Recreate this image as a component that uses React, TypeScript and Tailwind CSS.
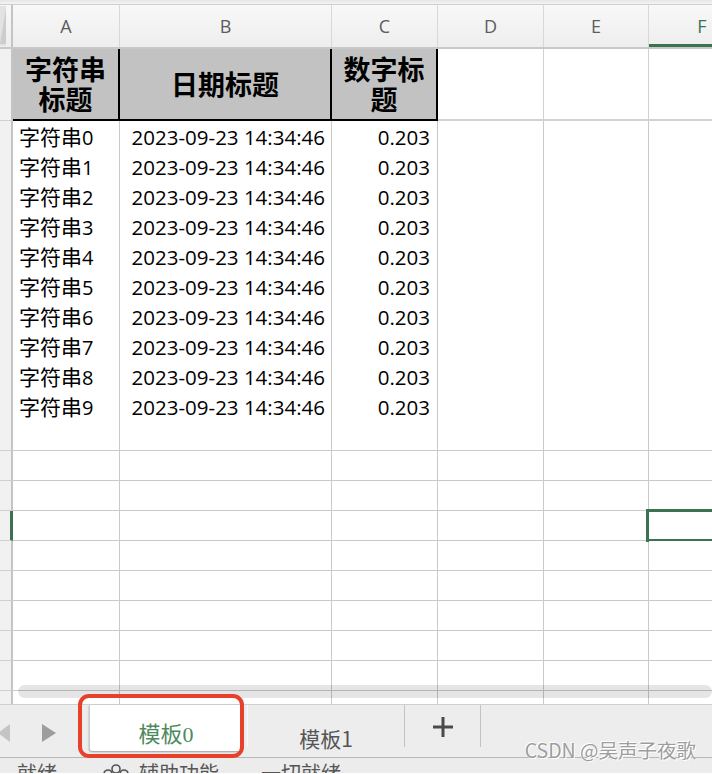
import React from "react";

const GRID = "grid grid-cols-[13px_107px_212px_106px_106px_105px_106px]";
const LETTERS = ["A", "B", "C", "D", "E"];
const DATA = Array.from({ length: 10 }, (_, i) => i);
const TOTAL_ROWS = 20;
const SELECTED_ROW = 13;

const latin = "font-['Open_Sans','Noto_Sans_CJK_SC',sans-serif]";
const cjk = "font-['Noto_Sans_CJK_SC',sans-serif]";

function RowHead({ n, selected }: { n: number; selected?: boolean }) {
  return (
    <div
      className={`flex items-center justify-end overflow-hidden bg-[#f1f1f1] border-b border-[#cfcfcf] ${
        selected ? "border-r-[3px] border-r-[#3b7350]" : "border-r-2 border-r-[#c4c4c4]"
      }`}
    >
      <span className={`mr-[11px] text-[16px] text-[#8a8a8a] ${latin}`}>{n}</span>
    </div>
  );
}

function ColumnHeader() {
  return (
    <div className={`${GRID} h-[44px] border-b-2 border-[#c8c8c8] bg-gradient-to-b from-[#f8f8f8] to-[#eeeeee]`}>
      <div className="flex border-r-2 border-[#c4c4c4] pr-[5px] py-[1px]">
        <div className="relative flex-1 bg-[#e2e2e2]">
          <svg className="absolute inset-0 h-full w-full" viewBox="0 0 8 40" preserveAspectRatio="none">
            <polygon points="8,2 8,38 0,38" fill="#cdcdcd" />
          </svg>
        </div>
      </div>
      {LETTERS.map((l) => (
        <div
          key={l}
          className={`flex items-center justify-center border-r border-[#d8d8d8] text-[18px] text-[#5c5c5c] ${latin}`}
        >
          {l}
        </div>
      ))}
      <div className={`flex items-center justify-center border-b-[3px] border-[#3b7350] pt-[3px] text-[18px] text-[#3b7350] ${latin}`}>
        F
      </div>
    </div>
  );
}

function TitleRow() {
  const head = `flex items-center justify-center bg-[#c2c2c2] border-r-2 border-b-2 border-black text-center text-[27px] font-bold leading-[30px] text-black ${cjk}`;
  return (
    <div className={`${GRID} h-[72px]`}>
      <RowHead n={1} />
      <div className={head}>
        <span>
          字符串
          <br />
          标题
        </span>
      </div>
      <div className={head}>日期标题</div>
      <div className={head}>
        <span>
          数字标
          <br />
          题
        </span>
      </div>
      <div className="border-r border-b-2 border-[#d2d2d2] bg-white" />
      <div className="border-r border-b-2 border-[#d2d2d2] bg-white" />
      <div className="border-b-2 border-[#d2d2d2] bg-white" />
    </div>
  );
}

function Row({ idx }: { idx: number }) {
  const hasData = idx < DATA.length;
  const cell = "flex items-center border-r border-b border-[#c9c9c9] bg-white pb-[1px] text-black whitespace-nowrap";
  return (
    <div className={`${GRID} h-[30px]`}>
      <RowHead n={idx + 2} selected={idx === SELECTED_ROW} />
      <div className={`${cell} pl-[6px]`}>
        {hasData && (
          <span className={`text-[20px] ${latin}`}>
            <span className={`text-[21px] ${cjk}`}>字符串</span>
            {idx}
          </span>
        )}
      </div>
      <div className={`${cell} justify-end pr-[6px] text-[20.5px] ${latin}`}>
        {hasData && "2023-09-23 14:34:46"}
      </div>
      <div className={`${cell} justify-end pr-[7px] text-[20.5px] ${latin}`}>{hasData && "0.203"}</div>
      <div className={cell} />
      <div className={cell} />
      <div className={`${cell} relative`}>
        {idx === SELECTED_ROW && (
          <div className="absolute -left-[3px] -top-[2px] -right-[2px] -bottom-[2px] border-[3px] border-[#3b7350]" />
        )}
      </div>
    </div>
  );
}

function TabBar() {
  return (
    <div className="relative flex h-[54px] border-t border-b border-t-[#d0d0d0] border-b-[#b8b8b8] bg-[#ededed]">
      <div className="flex w-[89px] items-center pt-[3px]">
        <svg width="12" height="18" viewBox="0 0 12 18" className="-ml-[2px]">
          <polygon points="12,0 12,18 0,9" fill="#c4c4c4" />
        </svg>
        <svg width="14" height="18" viewBox="0 0 14 18" className="ml-[32px]">
          <polygon points="0,0 0,18 14,9" fill="#9d9d9d" />
        </svg>
      </div>
      <div className="flex h-[46px] w-[153px] justify-center rounded-b-[3px] border-l border-[#c9c9c9] bg-white pt-[18px] shadow-[0_1px_2px_rgba(0,0,0,0.35)]">
        <span className="font-['Liberation_Serif','Noto_Sans_CJK_SC',serif] text-[22px] leading-[24px] text-[#4e8a5d]">
          模板0
        </span>
      </div>
      <div className="ml-[5px] flex h-[42px] w-[158px] justify-center border-l border-r border-l-[#f8f8f8] border-r-[#c2c2c2] pt-[21px]">
        <span className={`text-[21px] leading-[24px] text-[#555] ${cjk}`}>模板1</span>
      </div>
      <div className="flex h-[42px] w-[76px] items-center justify-center border-r border-[#c2c2c2] pt-[2px]">
        <svg width="20" height="20" viewBox="0 0 20 20">
          <rect x="0" y="8.5" width="20" height="3" fill="#4a4a4a" />
          <rect x="8.5" y="0" width="3" height="20" fill="#4a4a4a" />
        </svg>
      </div>
      <div className="absolute -top-[11px] left-[78px] h-[64px] w-[166px] rounded-[11px] border-4 border-[#e8412b]" />
      <div
        className={`absolute right-[16px] top-[34px] text-[19.5px] leading-[22px] text-[#9d9d9d] ${cjk} [text-shadow:1px_1px_0_#fff,-1px_-1px_0_#fff]`}
      >
        CSDN @吴声子夜歌
      </div>
    </div>
  );
}

function StatusBar() {
  return (
    <div className={`flex h-[15px] items-start overflow-hidden bg-[#ececec] pt-[3px] text-[20px] leading-[24px] text-[#555] ${cjk}`}>
      <span className="ml-[17px]">就绪</span>
      <svg width="26" height="26" viewBox="0 0 26 26" className="ml-[46px] mt-[3px]">
        <g fill="none" stroke="#555" strokeWidth="1.6">
          <circle cx="13" cy="5" r="4" />
          <circle cx="5" cy="10" r="4" />
          <circle cx="21" cy="10" r="4" />
          <circle cx="8" cy="19" r="4" />
          <circle cx="18" cy="19" r="4" />
        </g>
      </svg>
      <span className="ml-[10px]">辅助功能</span>
      <span className="ml-[42px]">一切就绪</span>
    </div>
  );
}

export default function App() {
  return (
    <div className="h-[774px] w-[712px] overflow-hidden bg-white">
      <div className="h-[5px] border-b border-[#cfcfcf] bg-gradient-to-b from-[#e6e6e6] to-[#f4f4f4]" />
      <ColumnHeader />
      <TitleRow />
      <div className="relative h-[583px] overflow-hidden">
        {Array.from({ length: TOTAL_ROWS }, (_, i) => (
          <Row key={i} idx={i} />
        ))}
        <div className="absolute bottom-[6px] left-[18px] right-0 h-[13px] rounded-full bg-black/10" />
      </div>
      <TabBar />
      <StatusBar />
    </div>
  );
}
